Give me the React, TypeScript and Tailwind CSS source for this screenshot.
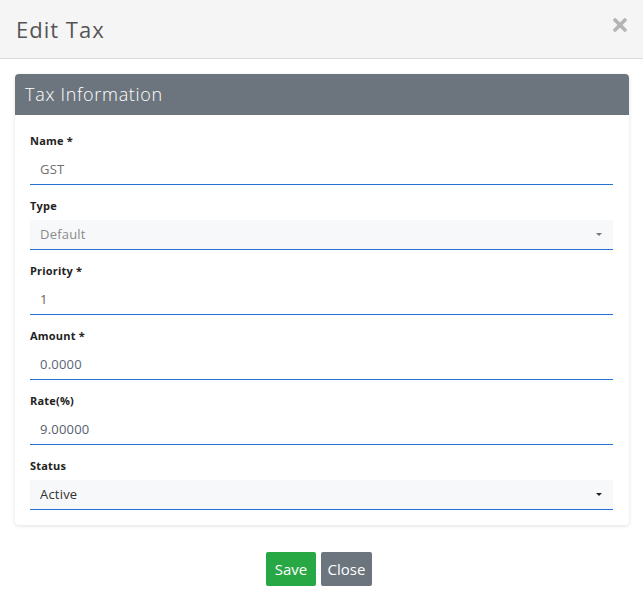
import { X } from 'lucide-react';

const fields = [
  { label: 'Name *', value: 'GST', kind: 'input', color: 'text-[#6f6f6f]' },
  { label: 'Type', value: 'Default', kind: 'select', color: 'text-[#8a8a8a]', caret: 'border-t-[#777]' },
  { label: 'Priority *', value: '1', kind: 'input', color: 'text-[#6e5a64]' },
  { label: 'Amount *', value: '0.0000', kind: 'input', color: 'text-[#5c6478]' },
  { label: 'Rate(%)', value: '9.00000', kind: 'input', color: 'text-[#555d6e]' },
  { label: 'Status', value: 'Active', kind: 'select', color: 'text-[#333]', caret: 'border-t-[#222]' },
];

function Field({ f }: { f: (typeof fields)[number] }) {
  const isSelect = f.kind === 'select';
  return (
    <div className="mb-[13px] last:mb-0">
      <div className="h-4 leading-4 text-[11px] font-bold text-[#222] mb-[6px] tracking-[0.2px]">{f.label}</div>
      <div
        className={`h-[30px] flex items-center justify-between pl-[10px] pr-[11px] border-b border-[#2372cf] ${
          isSelect ? 'bg-[#f7f8f9]' : 'bg-white'
        }`}
      >
        <span className={`text-[13px] tracking-[0.2px] ${f.color}`}>{f.value}</span>
        {isSelect && (
          <span className={`w-0 h-0 border-l-[3.5px] border-r-[3.5px] border-t-[3.5px] border-l-transparent border-r-transparent ${f.caret}`} />
        )}
      </div>
    </div>
  );
}

export default function App() {
  return (
    <div className="w-[643px] h-[616px] bg-white font-['Open_Sans',sans-serif] overflow-hidden">
      {/* Modal header */}
      <div className="h-[59px] bg-[#f5f5f5] border-b border-[#dcdcdc] flex items-center justify-between pl-4 pr-[13px]">
        <h1 className="text-[22px] text-[#555] font-normal leading-none tracking-[1px] -mt-[1px]">Edit Tax</h1>
        <X className="w-[20px] h-[20px] text-[#b5b5b5] -mt-[9px]" strokeWidth={4.5} />
      </div>

      {/* Modal body */}
      <div className="px-[15px] pt-[15px] pb-[27px]">
        <div className="rounded-[4px] shadow-[0_1px_4px_rgba(0,0,0,0.12)] mr-[-1px]">
          <div className="h-[41px] bg-[#6c757d] rounded-t-[4px] flex items-center px-[10px]">
            <span className="text-[18px] text-white font-light tracking-[0.7px]">Tax Information</span>
          </div>
          <div className="pt-[18px] pb-[15px] pl-[15px] pr-[16px]">
            {fields.map(f => (
              <Field key={f.label} f={f} />
            ))}
          </div>
        </div>
      </div>

      {/* Footer */}
      <div className="flex justify-center gap-[5px] pr-[5px]">
        <button className="w-[50px] h-[34px] bg-[#28a745] text-white text-[15px] rounded-[2px]">Save</button>
        <button className="w-[51px] h-[34px] bg-[#6c757d] text-white text-[15px] rounded-[2px]">Close</button>
      </div>
    </div>
  );
}
